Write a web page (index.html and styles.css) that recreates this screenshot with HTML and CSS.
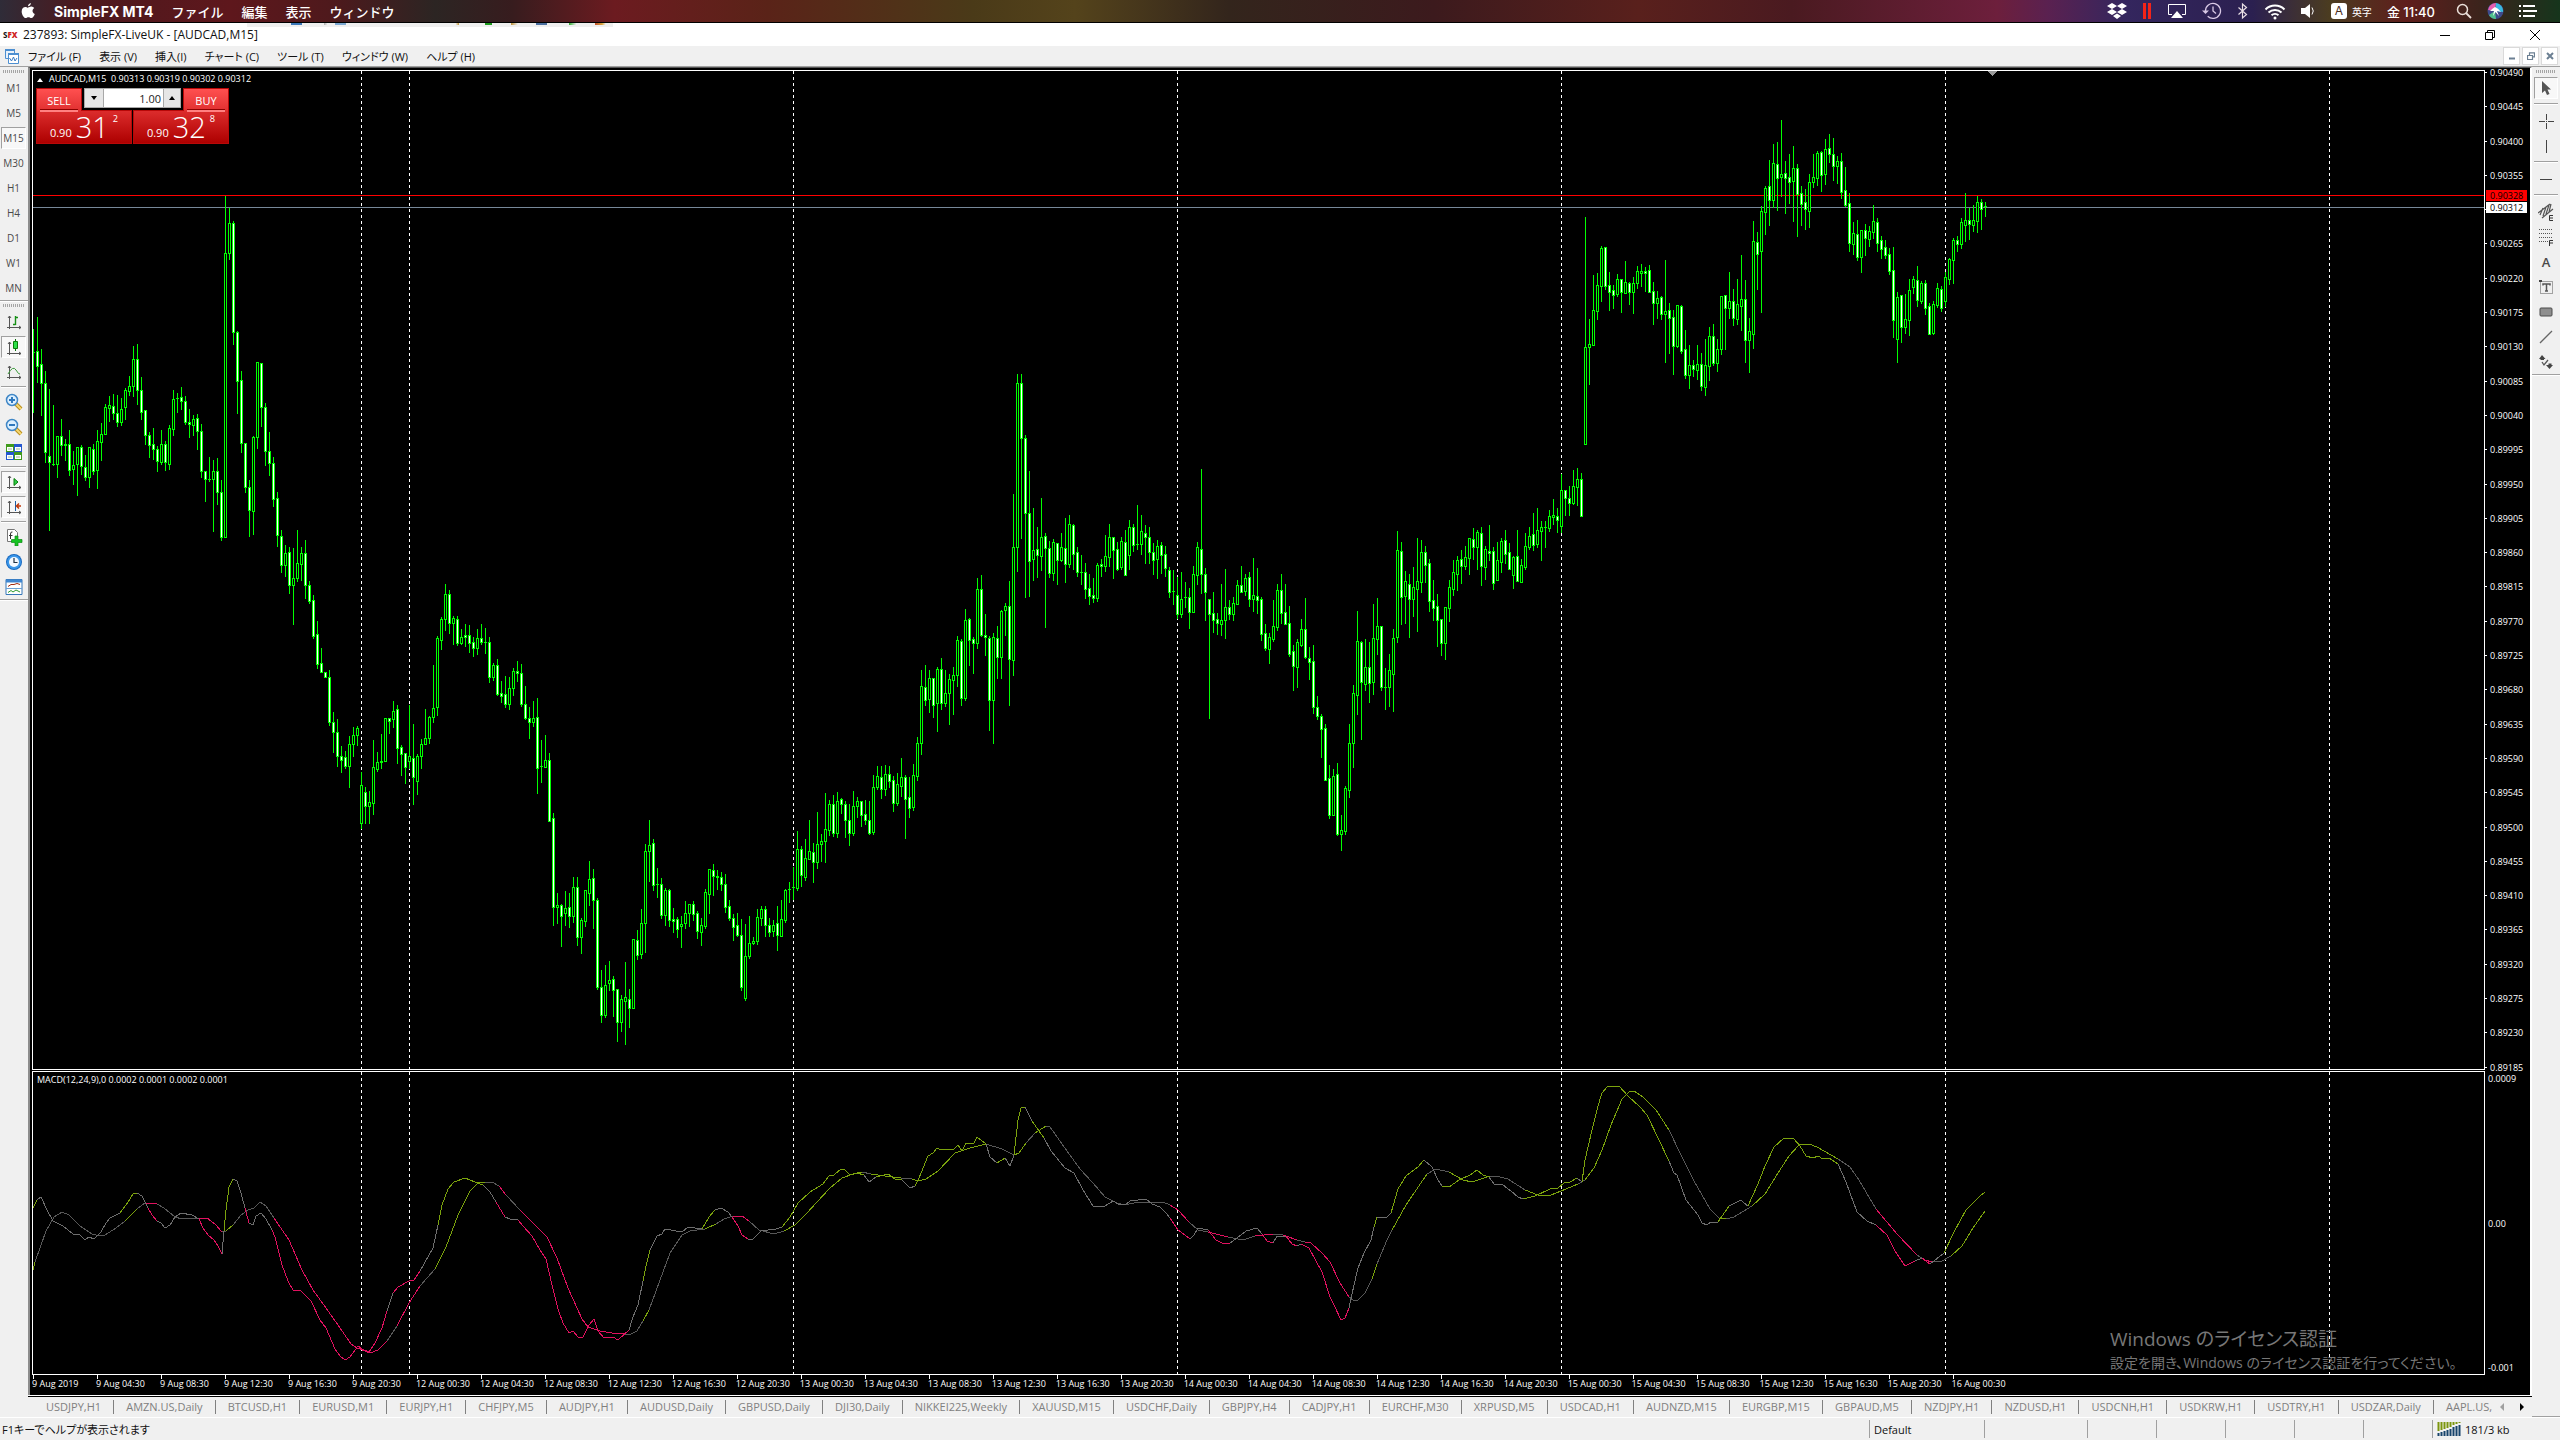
FILE: index.html
```html
<!DOCTYPE html>
<html lang="ja">
<head>
    <meta charset="UTF-8">
    <meta name="viewport" content="width=device-width, initial-scale=1.0">
    <title>237893: SimpleFX-LiveUK - [AUDCAD,M15]</title>
    <link rel="stylesheet" href="styles.css">
</head>
<body>
<header class="mac-bar">
    <svg class="apple" viewBox="0 0 16 18" aria-hidden="true"><path d="M11 0c.2 1.700-1.400 3.500-3 3.500C7.800 1.900 9.500.200 11 0zM8.200 4.600c.8 0 1.800-1 3.400-.9 1.200.1 2.300.6 3 1.600-2.700 1.700-2.200 5.200.6 6.300-.7 1.900-2.100 4.400-3.600 4.400-1.200 0-1.600-.8-3.100-.8-1.500 0-2 .8-3.100.8C3.800 16 1.300 12.300 1.300 9c0-3.100 2-4.700 3.900-4.700 1.300 0 2.200.8 3 .8z" fill="#fff"/></svg>
    <nav class="mac-menu">
        <a href="#" class="app-name">SimpleFX MT4</a>
        <a href="#">ファイル</a>
        <a href="#">編集</a>
        <a href="#">表示</a>
        <a href="#">ウィンドウ</a>
    </nav>
    <div class="mac-status">
        <svg width="20" height="18" viewBox="0 0 20 18"><path fill="#fff" d="M5 1l5 3-5 3-5-3zM15 1l5 3-5 3-5-3zM5 7l5 3-5 3-5-3zM15 7l5 3-5 3-5-3zM10 11.500l4 2.500-4 3-4-3z"/></svg>
        <svg width="10" height="18" viewBox="0 0 10 18"><path fill="#f42318" d="M1 1h3v16H1zM6 1h3v16H6z"/></svg>
        <svg width="20" height="18" viewBox="0 0 20 18"><path fill="none" stroke="#fff" d="M5 12.500H1.500v-10h17v10H15"/><path fill="#fff" d="M10 9l6 7H4z"/></svg>
        <svg width="20" height="18" viewBox="0 0 20 18"><g fill="none" stroke="#d9c9e6" stroke-width="1.300"><path d="M3.500 9a7.500 7.500 0 1 1 2.200 5.200M11 4.500V9l3 2.500"/></g><path fill="#d9c9e6" d="M0 8.500h7L3.500 12z"/></svg>
        <svg width="12" height="18" viewBox="0 0 12 18"><path fill="none" stroke="#e9dfe6" stroke-width="1.200" d="M1.500 5.500l8 7-4 3.500V2l4 3.500-8 7"/></svg>
        <svg width="22" height="18" viewBox="0 0 22 18"><g fill="none" stroke="#fff" stroke-width="2"><path d="M1.500 7.500a13.500 13.500 0 0 1 19 0M4.500 10.500a9.500 9.500 0 0 1 13 0M7.500 13.300a5.200 5.200 0 0 1 7 0"/></g><circle cx="11" cy="16" r="1.500" fill="#fff"/></svg>
        <svg width="14" height="18" viewBox="0 0 14 18"><path fill="#fff" d="M0 6h4l5-4v14l-5-4H0z"/><path fill="none" stroke="#fff" d="M11 5.500q2.500 3.500 0 7"/></svg>
        <span class="ime-badge">A</span>
        <span class="ime">英字</span>
        <span class="clock">金 11:40</span>
        <svg width="16" height="18" viewBox="0 0 16 18"><circle cx="6.500" cy="7.500" r="5" fill="none" stroke="#eadfd9" stroke-width="1.500"/><path stroke="#eadfd9" stroke-width="1.800" d="M10 11l5 5"/></svg>
        <svg width="17" height="18" viewBox="0 0 17 18"><circle cx="8.500" cy="9" r="8" fill="#3d4a8c"/><path fill="#e55fae" d="M1 8a8 8 0 0 1 8-7l-1 8z"/><path fill="#39b9e0" d="M9 1a8 8 0 0 1 7 9L8.500 9z"/><path fill="#4fc28e" d="M2 13l6-4 1 8a8 8 0 0 1-7-4z"/><path fill="#fff" d="M3 9q3-3 5-4 3 1 6 5-3-1-4-1l2 5-3.500-4-2.500 4 1-5z"/></svg>
        <svg width="18" height="18" viewBox="0 0 18 18"><path fill="#fff" d="M0 3h2v2H0zM0 8h2v2H0zM0 13h2v2H0zM4 3h12v2H4zM4 8h14v2H4zM4 13h12v2H4z"/></svg>
    </div>
</header>

<div class="title-bar">
    <span class="behind" aria-hidden="true"></span>
    <span class="logo">S<b>FX</b></span>
    <h1>237893: SimpleFX-LiveUK - [AUDCAD,M15]</h1>
    <div class="window-buttons">
        <button type="button" aria-label="最小化"><svg width="10" height="10" viewBox="0 0 10 10"><path d="M0 5.500h10" stroke="#000"/></svg></button>
        <button type="button" aria-label="元に戻す"><svg width="10" height="10" viewBox="0 0 10 10"><path d="M.5 2.500h7v7h-7zM2.500 2V.5h7v7H8" fill="none" stroke="#000"/></svg></button>
        <button type="button" aria-label="閉じる"><svg width="10" height="10" viewBox="0 0 10 10"><path d="M0 0l10 10M10 0L0 10" stroke="#000"/></svg></button>
    </div>
</div>

<div class="menu-bar">
    <svg class="menu-icon" width="14" height="15" viewBox="0 0 14 15"><path d="M.5.500h9v9h-9z" fill="#e9f2fb" stroke="#4d8fd1"/><path d="M3.500 4.500h10v10h-10z" fill="#fff" stroke="#4d8fd1"/><path d="M0 1h10M3 5h11" stroke="#4d8fd1" stroke-width="2"/><path d="M4.500 9l2 3 2-4 1.500 4 2-3" fill="none" stroke="#3a7cc4"/></svg>
    <nav class="menu">
        <a href="#">ファイル (F)</a>
        <a href="#">表示 (V)</a>
        <a href="#">挿入(I)</a>
        <a href="#">チャート (C)</a>
        <a href="#">ツール (T)</a>
        <a href="#">ウィンドウ (W)</a>
        <a href="#">ヘルプ (H)</a>
    </nav>
    <div class="mdi-buttons">
        <button type="button" aria-label="チャートを最小化"><svg width="8" height="8" viewBox="0 0 8 8"><path d="M1 6.500h6" stroke="#6b7f92" stroke-width="2"/></svg></button>
        <button type="button" aria-label="チャートを元に戻す"><svg width="8" height="8" viewBox="0 0 8 8"><path d="M.5 3.500h5v4h-5zM2.500 3V.800h5v4H6" fill="none" stroke="#6b7f92" stroke-width="1.200"/></svg></button>
        <button type="button" aria-label="チャートを閉じる"><svg width="8" height="8" viewBox="0 0 8 8"><path d="M1 1l6 6M7 1L1 7" stroke="#6b7f92" stroke-width="2"/></svg></button>
    </div>
</div>

<main class="workspace">
    <aside class="toolbar left">
        <div class="tool-group">
            <i class="grip"></i>
            <button type="button">M1</button>
            <button type="button">M5</button>
            <button type="button" class="pressed">M15</button>
            <button type="button">M30</button>
            <button type="button">H1</button>
            <button type="button">H4</button>
            <button type="button">D1</button>
            <button type="button">W1</button>
            <button type="button">MN</button>
        </div>
        <div class="tool-group">
            <i class="grip"></i>
            <button type="button" aria-label="バーチャート"><svg width="16" height="16" viewBox="0 0 16 16"><path d="M3.500 2v13M1 13.500h14M2 4l1.500-2L5 4M13 12l2 1.500-2 1.500" fill="none" stroke="#555"/><path d="M9.500 2v9M9.500 3.500H12M7 10.500h2.500" stroke="#169016" fill="none" stroke-width="1.400"/></svg></button>
            <button type="button" class="pressed" aria-label="ローソク足"><svg width="16" height="16" viewBox="0 0 16 16"><path d="M3.500 3v13M1 14.500h14M2 5l1.500-2L5 5M13 13l2 1.500-2 1.500" fill="none" stroke="#555"/><path d="M9.500 0v12" stroke="#0b6f0b"/><path d="M7.500 2.500h4v7h-4z" fill="#2ee04a" stroke="#0b7f0b"/></svg></button>
            <button type="button" aria-label="ラインチャート"><svg width="16" height="16" viewBox="0 0 16 16"><path d="M3.500 2v13M1 13.500h14M2 4l1.500-2L5 4M13 12l2 1.500-2 1.500" fill="none" stroke="#555"/><path d="M2 10q5-9 8-4t4 4" fill="none" stroke="#3a9a3a"/></svg></button>
            <hr>
            <button type="button" aria-label="ズームイン"><svg width="18" height="18" viewBox="0 0 18 18"><path d="M10 10l6 6" stroke="#b98e1e" stroke-width="4"/><path d="M10 10l6 6" stroke="#f7d972" stroke-width="2"/><circle cx="7" cy="7" r="5.500" fill="#dcf0ff" stroke="#3f86c6" stroke-width="1.500"/><path d="M7 4v6M4 7h6" stroke="#2f78bd" stroke-width="2"/></svg></button>
            <button type="button" aria-label="ズームアウト"><svg width="18" height="18" viewBox="0 0 18 18"><path d="M10 10l6 6" stroke="#b98e1e" stroke-width="4"/><path d="M10 10l6 6" stroke="#f7d972" stroke-width="2"/><circle cx="7" cy="7" r="5.500" fill="#dcf0ff" stroke="#3f86c6" stroke-width="1.500"/><path d="M4 7h6" stroke="#2f78bd" stroke-width="2"/></svg></button>
            <button type="button" aria-label="ウィンドウの整列"><svg width="16" height="16" viewBox="0 0 16 16"><path d="M0 0h8v8H0zM8 8h8v8H8z" fill="#3f9a1c"/><path d="M8 0h8v8H8zM0 8h8v8H0z" fill="#2457cf"/><path d="M1 3h6v4H1zM9 3h6v4H9zM1 11h6v4H1zM9 11h6v4H9z" fill="#fff"/><path d="M2 5h4M10 5h4M2 13h4M10 13h4" stroke="#9dbb9d"/></svg></button>
            <hr>
            <button type="button" class="pressed" aria-label="自動スクロール"><svg width="16" height="16" viewBox="0 0 16 16"><path d="M3.500 2v13M1 13.500h14M2 4l1.500-2L5 4M13 12l2 1.500-2 1.500" fill="none" stroke="#555"/><path d="M8 4.500l4 3.500-4 3.500z" fill="#2fd04a" stroke="#0b7f0b"/></svg></button>
            <button type="button" class="pressed" aria-label="チャートシフト"><svg width="16" height="16" viewBox="0 0 16 16"><path d="M3.500 2v13M1 13.500h14M2 4l1.500-2L5 4M13 12l2 1.500-2 1.500" fill="none" stroke="#555"/><path d="M9.500 2v10" stroke="#1c5fa8"/><path d="M15 7h-4M13 4.500L10.500 7 13 9.500" stroke="#c0390b" stroke-width="1.500" fill="none"/></svg></button>
            <hr>
            <button type="button" aria-label="インディケーター"><svg width="18" height="18" viewBox="0 0 18 18"><path d="M2.500 1.500h7l3 3v9h-10z" fill="#fff" stroke="#777"/><path d="M7.500 4q-2-.5-2 2v5M4 7.500h3.500" fill="none" stroke="#333"/><path d="M10 8h3v3.500h4v3h-4V18h-3v-3.500H6.500v-3H10z" fill="#16c322" stroke="#0c8a14" stroke-width=".7"/></svg></button>
            <button type="button" aria-label="時間足設定"><svg width="18" height="18" viewBox="0 0 18 18"><circle cx="9" cy="9" r="8" fill="#1668c0"/><circle cx="9" cy="9" r="7" fill="#3c98ea"/><circle cx="9" cy="9" r="5" fill="#f4f9ff"/><path d="M9 5v4.500h3.500" fill="none" stroke="#234" stroke-width="1.200"/></svg></button>
            <button type="button" aria-label="定型チャート"><svg width="18" height="16" viewBox="0 0 18 16"><path d="M1 .5h16v15H1z" fill="#fff" stroke="#3576b8"/><path d="M1 2h16" stroke="#3f86d0" stroke-width="3"/><path d="M1 9.500h16" stroke="#6aa0d4"/><path d="M3 7.500l3-2h3l3-1 3 1" fill="none" stroke="#a02a10"/><path d="M3 13.500l3-2 2 1.500 3-2 4 2" fill="none" stroke="#2c9a2c"/></svg></button>
        </div>
    </aside>

    <section class="chart-column">
        <div class="chart">
            <div class="panel price-panel">
                <svg id="price-chart" viewBox="33 71 2451 998" preserveAspectRatio="none" aria-label="AUDCAD M15"></svg>
                <p class="quote"><i class="collapse"></i>AUDCAD,M15&nbsp; 0.90313 0.90319 0.90302 0.90312</p>
                <div class="trade">
                    <button type="button" class="side sell">SELL</button>
                    <div class="lots">
                        <button type="button" aria-label="ロットを減らす"><i class="down"></i></button>
                        <input type="text" value="1.00" aria-label="ロット数">
                        <button type="button" aria-label="ロットを増やす"><i class="up"></i></button>
                    </div>
                    <button type="button" class="side buy">BUY</button>
                    <button type="button" class="price bid"><span>0.90</span><strong>31</strong><sup>2</sup></button>
                    <button type="button" class="price ask"><span>0.90</span><strong>32</strong><sup>8</sup></button>
                </div>
            </div>
            <div class="axis price-axis">
                <div class="ticks" id="price-ticks"></div>
                <span class="tag ask-tag">0.90328</span>
                <span class="tag bid-tag">0.90312</span>
            </div>
            <div class="panel macd-panel">
                <svg id="macd-chart" viewBox="33 1072 2451 302" preserveAspectRatio="none" aria-label="MACD"></svg>
                <p class="quote">MACD(12,24,9),0 0.0002 0.0001 0.0002 0.0001</p>
            </div>
            <div class="axis macd-axis">
                <span>0.0009</span>
                <span>0.00</span>
                <span>-0.001</span>
            </div>
            <div class="time-axis" id="time-axis"></div>
            <div class="watermark">
                <p class="watermark-title">Windows のライセンス認証</p>
                <p>設定を開き、Windows のライセンス認証を行ってください。</p>
            </div>
        </div>
        <div class="tab-bar">
            <nav class="tabs">
                <a href="#">USDJPY,H1</a>
                <a href="#">AMZN.US,Daily</a>
                <a href="#">BTCUSD,H1</a>
                <a href="#">EURUSD,M1</a>
                <a href="#">EURJPY,H1</a>
                <a href="#">CHFJPY,M5</a>
                <a href="#">AUDJPY,H1</a>
                <a href="#">AUDUSD,Daily</a>
                <a href="#">GBPUSD,Daily</a>
                <a href="#">DJI30,Daily</a>
                <a href="#">NIKKEI225,Weekly</a>
                <a href="#">XAUUSD,M15</a>
                <a href="#">USDCHF,Daily</a>
                <a href="#">GBPJPY,H4</a>
                <a href="#">CADJPY,H1</a>
                <a href="#">EURCHF,M30</a>
                <a href="#">XRPUSD,M5</a>
                <a href="#">USDCAD,H1</a>
                <a href="#">AUDNZD,M15</a>
                <a href="#">EURGBP,M15</a>
                <a href="#">GBPAUD,M5</a>
                <a href="#">NZDJPY,H1</a>
                <a href="#">NZDUSD,H1</a>
                <a href="#">USDCNH,H1</a>
                <a href="#">USDKRW,H1</a>
                <a href="#">USDTRY,H1</a>
                <a href="#">USDZAR,Daily</a>
            </nav>
            <a href="#" class="last-tab">AAPL.US,</a>
            <button type="button" class="tab-prev" aria-label="前のタブ"></button>
            <button type="button" class="tab-next" aria-label="次のタブ"></button>
        </div>
    </section>

    <aside class="toolbar right">
        <div class="tool-group">
            <i class="grip"></i>
            <button type="button" class="pressed" aria-label="カーソル"><svg width="16" height="16" viewBox="0 0 16 16"><path d="M4 1v12l3-2.500 2 4.500 2.500-1-2-4.500H13z" fill="#555"/></svg></button>
            <hr>
            <button type="button" aria-label="クロスヘア"><svg width="16" height="16" viewBox="0 0 16 16"><path d="M8.500 1v6M8.500 10v6M1 8.500h6M10 8.500h6M8 8.500h1" stroke="#444"/></svg></button>
            <button type="button" aria-label="垂直線"><svg width="16" height="16" viewBox="0 0 16 16"><path d="M8.500 2v13" stroke="#444"/></svg></button>
            <hr>
            <button type="button" aria-label="水平線"><svg width="16" height="16" viewBox="0 0 16 16"><path d="M2 8.500h12" stroke="#444"/></svg></button>
            <hr>
            <button type="button" aria-label="等距離チャネル"><svg width="16" height="18" viewBox="0 0 16 18"><path d="M0 10L12 1M4 15L15 6M2 12l3-7M5 13l3-9M8 11l3-9M11 9l2-8" stroke="#555" stroke-width="1.200"/><path d="M15 12.500h-3.500v5H15M11.500 15H15" stroke="#333" fill="none"/></svg></button>
            <button type="button" aria-label="フィボナッチ"><svg width="16" height="18" viewBox="0 0 16 18"><path d="M1 1.500h14M1 5.500h14M1 9.500h14M1 13.500h9" stroke="#555" stroke-dasharray="1 1"/><path d="M15 12.500h-3.500V18M11.500 15H15" stroke="#333" fill="none"/></svg></button>
            <button type="button" class="letter" aria-label="テキスト">A</button>
            <button type="button" aria-label="テキストラベル"><svg width="16" height="16" viewBox="0 0 16 16"><path d="M2.500 2.500h12v12h-12z" stroke="#555" fill="none" stroke-dasharray="1 1"/><path d="M5 6.500V5h7v1.500M8.500 5v7M7 12h3" stroke="#555" stroke-width="1.500" fill="none"/><path d="M1 1h3v2H1z" fill="#444"/></svg></button>
            <button type="button" aria-label="長方形"><svg width="16" height="16" viewBox="0 0 16 16"><rect x="2" y="4" width="12" height="8" rx="1" fill="#8e8e8e" stroke="#4c4c4c"/></svg></button>
            <button type="button" aria-label="トレンドライン"><svg width="16" height="16" viewBox="0 0 16 16"><path d="M2 14L14 2" stroke="#666" stroke-width="1.300"/></svg></button>
            <button type="button" aria-label="矢印"><svg width="16" height="16" viewBox="0 0 16 16"><path d="M4 1l3.500 4H6v1H2.500V5H1zM11.500 15l3.500-4h-1.500V9.500h-3V11H8z" fill="#444"/><path d="M4 8l2 3 4-5" stroke="#555" fill="none" stroke-width="1.300"/></svg></button>
        </div>
    </aside>
</main>

<footer class="status-bar">
    <span class="help">F1キーでヘルプが表示されます</span>
    <span class="cell wide">Default</span>
    <span class="cell mid"></span>
    <span class="cell"></span>
    <span class="cell"></span>
    <span class="cell"></span>
    <span class="cell"></span>
    <span class="cell"></span>
    <span class="cell traffic">
        <svg width="24" height="14" viewBox="0 0 24 14"><path d="M1.500 0v9M4.500 0v8M7.500 0v7M10.500 0v6M13.500 0v5M16.500 0v3M19.500 0v2M22.500 0v1" stroke="#7c960f" stroke-width="2"/><path d="M1.500 14v-3M4.500 14v-4M7.500 14V9M10.500 14V8M13.500 14V7M16.500 14V5M19.500 14V4M22.500 14V3" stroke="#17436b" stroke-width="2"/></svg>
        181/3 kb
    </span>
</footer>
<script src="chart.js"></script>
</body>
</html>
```
FILE: styles.css
```css
* {
    box-sizing: border-box;
}

body {
    display: flex;
    flex-direction: column;
    min-height: 100vh;
    margin: 0;
    background: #f0f0f0;
    color: #111;
    font-family: "Open Sans", "Noto Sans CJK JP", sans-serif;
    font-size: 12px;
}

a {
    color: inherit;
    text-decoration: none;
}

h1, p {
    margin: 0;
    font-weight: normal;
}

button {
    display: flex;
    align-items: center;
    justify-content: center;
    margin: 0;
    padding: 0;
    border: 0;
    background: none;
    color: inherit;
    font-family: inherit;
    font-size: inherit;
}

/* Mac menu bar */
.mac-bar {
    display: flex;
    align-items: center;
    height: 23px;
    padding: 0 23px 0 20px;
    border-bottom: 1px solid #000;
    background: linear-gradient(90deg, #2f2c38 0%, #4c191e 3%, #5e171c 9%, #4e191c 13%, #2c2523 17%, #371c1e 20%, #6c1b20 24%, #5a2318 30%, #4a3a18 38%, #54431b 42%, #33251c 48%, #3c1a1d 56%, #59201c 64%, #4a1a20 70%, #6d1f3c 78%, #5a2150 80%, #34265e 83%, #2b2050 88%, #4b3c20 91%, #5f1e1c 94%, #3a241c 97%, #16351c 100%);
    color: #fff;
    font-family: Inter, "Noto Sans CJK JP", sans-serif;
    font-size: 13px;
}

.apple {
    width: 16px;
    height: 17px;
}

.mac-menu {
    display: flex;
    flex: 1;
    align-items: center;
    gap: 18px;
    padding-left: 18px;
    font-weight: 500;
}

.mac-menu .app-name {
    font-size: 14px;
    font-weight: bold;
}

.mac-status {
    display: flex;
    align-items: center;
    gap: 15px;
}

.ime-badge {
    width: 16px;
    margin-left: 1px;
    border-radius: 3px;
    background: #fff;
    color: #4a2b1c;
    font-size: 12px;
    line-height: 16px;
    text-align: center;
}

.ime {
    margin-left: -10px;
    font-size: 10px;
}

.clock {
    margin-right: 6px;
    font-weight: 500;
}

/* Application title */
.title-bar {
    position: relative;
    display: flex;
    align-items: center;
    height: 23px;
    padding: 0 20px 0 3px;
    background: #fff;
}

.behind {
    position: absolute;
    top: 0;
    left: 247px;
    width: 366px;
    height: 4px;
    background: linear-gradient(90deg, transparent 12%, #3b77b8 12%, #3b77b8 15%, transparent 15%, transparent 21%, #aaa 21%, transparent 22%, transparent 24%, #7ba7d1 24%, #7ba7d1 27%, transparent 27%, transparent 57%, #bb8b24 58%, transparent 58%, transparent 65%, #1c9a1c 65%, #1c9a1c 67%, transparent 67%, transparent 72%, #b98a2a 72%, transparent 74%, transparent 79%, #4b6fa0 79%, #4b6fa0 82%, transparent 82%, transparent 88%, #2fae2f 88%, transparent 90%, transparent 95%, #c04a2c 95%, #d9a63a 97%, transparent 98%) 0 0 / 100% 2px no-repeat, #efefef;
}

.logo {
    width: 20px;
    font-size: 8px;
    font-weight: bold;
}

.logo b {
    color: #cf1f1f;
}

.title-bar h1 {
    flex: 1;
    font-size: 12px;
}

.window-buttons {
    display: flex;
    gap: 35px;
}

.menu-bar {
    display: flex;
    align-items: center;
    height: 20px;
    padding: 0 2px 0 5px;
}

.menu {
    display: flex;
    flex: 1;
    gap: 18px;
    padding-left: 9px;
    font-size: 11px;
    font-feature-settings: "palt";
}

.mdi-buttons {
    display: flex;
    gap: 2px;
}

.mdi-buttons button {
    width: 17px;
    height: 18px;
    border: 1px solid #dadada;
    background: #fff;
}

/* Toolbars */
.workspace {
    display: flex;
    flex: 1;
    border-top: 1px solid #a0a0a0;
    border-bottom: 1px solid #fff;
}

.toolbar {
    width: 28px;
    padding-top: 1px;
    color: #4a4a4a;
    font-size: 10px;
}

.toolbar.right {
    border-bottom: 1px solid #a0a0a0;
}

.tool-group {
    display: flex;
    flex-direction: column;
    gap: 3px;
    padding: 2px 2px 1px 1px;
    border-bottom: 1px solid #a0a0a0;
    box-shadow: 0 1px #fff;
}

.tool-group + .tool-group {
    margin-top: 1px;
}

.grip {
    height: 3px;
    margin: 0 2px 1px;
    background: repeating-linear-gradient(90deg, #a5a5a5 0 1px, transparent 1px 2px);
}

.tool-group button {
    height: 22px;
    border: 1px solid transparent;
}

.tool-group .pressed {
    border-color: #a0a0a0 #fff #fff #a0a0a0;
    background: #f8f8f8;
}

.tool-group hr {
    width: 100%;
    height: 2px;
    margin: 0;
    border: 0;
    border-top: 1px solid #a0a0a0;
    background: #fff;
}

.right .tool-group {
    padding-left: 2px;
}

.right hr {
    margin: 1px 0 2px;
}

.letter {
    font-size: 13px;
    font-weight: 600;
}

/* Chart */
.chart-column {
    display: flex;
    flex: 1;
    flex-direction: column;
    min-width: 0;
}

.chart {
    position: relative;
    display: grid;
    flex: 1;
    grid-template-columns: 1fr 45px;
    grid-template-rows: 1000fr 305fr 20px;
    padding: 2px 0 0 2px;
    border-left: 2px solid #8c8c8c;
    border-right: 2px solid #fff;
    border-top: 1px solid #555;
    background: #000;
    color: #fff;
    font-size: 9px;
    line-height: 12px;
}

.panel {
    position: relative;
    min-height: 0;
    border: 1px solid #fff;
}

.macd-panel {
    margin-top: 1px;
}

.panel svg {
    position: absolute;
    width: 100%;
    height: 100%;
    shape-rendering: crispEdges;
}

.quote {
    position: relative;
    padding: 2px 4px;
}

.collapse, .up, .down {
    display: inline-block;
    border: 3px solid transparent;
    border-top: 0;
    border-bottom: 4px solid currentColor;
}

.collapse {
    margin-right: 6px;
}

.down {
    border-top: 4px solid currentColor;
    border-bottom: 0;
}

.axis {
    position: relative;
}

.ticks {
    display: flex;
    flex-direction: column;
    justify-content: space-between;
    height: 100%;
}

.ticks span, .macd-axis span {
    display: block;
    height: 5px;
    padding-left: 5px;
    line-height: 5px;
}

.ticks span {
    background: linear-gradient(#fff, #fff) 0 2px / 2px 1px no-repeat;
}

.tag {
    position: absolute;
    left: 1px;
    width: 41px;
    height: 11px;
    padding-left: 4px;
    line-height: 11px;
    color: #000;
}

.ask-tag {
    top: 12%;
    background: #f00;
}

.bid-tag {
    top: 13.2%;
    background: #fff;
}

.macd-axis {
    display: flex;
    flex-direction: column;
    justify-content: space-between;
    padding: 6px 0 5px;
}

.macd-axis span {
    padding-left: 3px;
}

.time-axis {
    display: flex;
    grid-column: 1 / 3;
    padding-right: 45px;
    white-space: nowrap;
}

.time-axis span {
    flex: none;
    width: calc(100% * 64 / 2453);
    padding-top: 3px;
    background: linear-gradient(#fff, #fff) 1px 0 / 1px 4px no-repeat;
}

.watermark {
    position: absolute;
    right: 86px;
    bottom: 22px;
    width: 334px;
    color: #777;
    font-size: 14px;
    line-height: 20px;
    white-space: nowrap;
    font-feature-settings: "palt";
}

.watermark-title {
    font-size: 19px;
    line-height: 28px;
}

/* One click trading */
.trade {
    position: relative;
    display: grid;
    grid-template-columns: 46px 101px 46px;
    grid-template-rows: 22px 34px;
    width: 193px;
    margin: 1px 3px;
}

.side {
    position: relative;
    z-index: 1;
    margin-bottom: -1px;
    border: 1px solid #b80808;
    border-bottom: 0;
    background: linear-gradient(#ff5050, #e03030);
    color: #fff;
    font-size: 11px;
}

.side::after {
    position: absolute;
    top: 20px;
    left: 3px;
    right: 3px;
    height: 2px;
    border-top: 1px solid #8e0000;
    background: #ff8080;
    content: "";
}

.price {
    position: relative;
    grid-row: 2;
    gap: 4px;
    width: 96px;
    border: 1px solid #b80808;
    background: linear-gradient(#dc2c2c, #ad0000);
    color: #fff;
    font-size: 11px;
}

.bid {
    grid-column: 1 / 3;
}

.ask {
    grid-column: 2 / 4;
    justify-self: end;
}

.price span {
    align-self: flex-end;
    padding-bottom: 4px;
    line-height: 12px;
}

.price strong {
    font-size: 29px;
    font-weight: 300;
    line-height: 32px;
}

.price sup {
    align-self: flex-start;
    line-height: 16px;
}

.lots {
    display: flex;
    height: 20px;
    margin: 0 2px;
    border: 1px solid #a8a8a8;
    background: #e6e6e6;
    color: #000;
}

.lots button {
    flex: none;
    width: 18px;
}

.lots button:last-child {
    width: 16px;
}

.lots input {
    flex: 1;
    width: 100%;
    min-width: 0;
    padding: 0 2px;
    border: 1px solid #a8a8a8;
    border-width: 0 1px;
    background: #fff;
    color: #222;
    font-family: inherit;
    font-size: 11px;
    text-align: right;
}

/* Chart tabs */
.tab-bar {
    display: flex;
    align-items: center;
    height: 22px;
    padding-left: 6px;
    border-top: 1px solid #fff;
    box-shadow: inset 0 1px #000;
    color: #808080;
    font-size: 11px;
    white-space: nowrap;
}

.tabs {
    display: flex;
    flex: 1;
    min-width: 0;
}

.tabs a {
    flex: 1 0 auto;
    padding: 0 6px;
    border-right: 1px solid #808080;
    line-height: 14px;
    text-align: center;
}

.last-tab {
    width: 58px;
    padding-left: 12px;
    overflow: hidden;
}

.tab-prev, .tab-next {
    width: 20px;
}

.tab-prev::before, .tab-next::before {
    border: 4px solid transparent;
    border-left: 0;
    border-right: 4px solid #a0a0a0;
    content: "";
}

.tab-next::before {
    border-right: 0;
    border-left: 4px solid #000;
}

/* Status bar */
.status-bar {
    display: flex;
    align-items: center;
    height: 22px;
    font-size: 11px;
    font-feature-settings: "palt";
}

.help {
    flex: 1;
    padding-left: 2px;
}

.cell {
    display: flex;
    align-items: center;
    gap: 4px;
    width: 69px;
    height: 18px;
    padding-left: 4px;
    border-left: 1px solid #a0a0a0;
}

.cell.wide {
    width: 115px;
}

.cell.mid {
    width: 103px;
}

.cell.traffic {
    width: 128px;
}
```
FILE: chart.js
```js
// Candles, one per 4px column: high, body top, body bottom, low, u(p) or d(own)
const candles = `
329 352 352 412 u,317 351 366 382 d,349 364 383 415 d,371 383 452 462 d,389 456 462 530 d,405 464 464 465 u,436 436 464 477 u,419 436 445 455 d,
439 444 445 460 d,430 444 470 475 d,451 465 469 484 u,447 447 464 495 u,445 447 466 474 d,455 467 477 480 d,447 447 477 487 u,444 449 471 474 d,
430 441 470 488 u,423 434 442 460 u,404 407 434 434 u,396 405 408 421 u,394 406 413 419 d,395 413 422 426 d,398 409 422 425 u,388 390 407 419 u,
376 386 391 395 u,346 359 386 396 u,344 359 390 404 d,377 390 412 419 d,410 410 435 444 d,432 435 445 457 d,428 444 449 459 d,446 449 461 471 d,
430 444 462 464 u,441 444 462 470 d,425 428 464 469 u,390 399 429 435 u,393 398 398 412 d,387 397 401 409 d,396 401 422 424 d,409 422 424 437 d,
415 419 425 435 u,414 418 431 449 d,424 431 471 477 d,471 471 479 501 d,457 479 479 481 u,460 471 479 531 u,458 471 492 504 d,480 492 537 540 d,
196 253 537 537 u,208 223 253 259 u,221 223 332 344 d,331 332 381 413 d,371 380 443 452 d,443 443 487 492 d,480 487 510 536 d,436 437 511 534 u,
362 362 437 448 u,363 363 407 426 d,403 407 451 465 d,432 451 463 475 d,457 463 499 506 d,492 498 535 546 d,530 536 565 572 d,545 553 565 576 u,
547 552 585 593 d,548 578 585 624 u,530 563 578 581 u,547 553 564 580 u,540 553 585 598 d,581 585 601 603 d,595 600 636 638 d,621 634 664 668 d,
648 663 672 672 d,672 672 677 677 d,670 677 722 725 d,712 722 732 752 d,719 732 756 766 d,746 756 760 772 d,751 757 766 768 d,736 744 766 787 u,
727 735 744 756 u,726 728 735 745 u,772 785 823 828 u,787 792 806 823 d,791 802 806 823 u,740 767 803 814 u,752 762 769 771 u,734 761 762 768 u,
718 718 761 761 u,718 718 721 733 d,701 711 719 727 u,705 709 748 763 d,745 747 754 775 d,753 753 767 783 d,705 756 761 768 u,724 758 777 804 d,
754 756 781 794 u,739 744 756 768 u,709 738 744 744 u,716 717 738 743 u,665 708 717 722 u,636 638 707 715 u,617 619 640 649 u,584 594 619 630 u,
590 594 623 633 d,616 618 623 644 u,616 619 643 645 d,629 637 643 644 u,624 635 637 646 d,625 635 643 652 d,637 642 648 656 d,629 638 648 654 u,
624 638 642 644 d,628 642 642 653 d,637 642 677 682 d,663 665 677 680 u,659 665 694 695 d,681 693 696 702 d,676 694 704 707 d,677 688 704 709 u,
668 671 688 695 u,661 671 673 681 d,664 673 704 706 d,686 704 718 719 d,707 718 722 738 d,701 718 722 726 u,698 717 768 793 d,740 766 766 782 u,
735 760 767 767 u,753 760 821 821 d,813 818 907 925 d,893 905 907 923 u,904 905 916 946 d,891 908 913 925 u,893 907 916 927 d,877 887 916 922 u,
877 887 937 945 d,918 920 937 953 u,890 890 921 926 u,861 879 893 905 u,869 878 900 928 d,898 900 987 989 d,970 987 1015 1022 d,965 985 1015 1017 u,
961 980 983 990 u,976 979 990 1016 d,989 989 1022 1041 d,995 999 1022 1031 u,962 997 1001 1044 u,989 999 1008 1027 d,939 939 1008 1008 u,930 940 955 959 d,
909 923 954 958 u,844 851 923 952 u,820 845 851 881 u,839 843 885 890 d,868 884 884 897 u,878 884 915 918 d,888 890 915 925 u,889 890 920 926 d,
908 919 921 932 d,917 919 929 937 d,916 924 926 947 u,901 913 923 928 u,904 904 913 926 u,901 904 914 920 d,911 913 931 938 d,918 925 932 945 u,
889 892 926 928 u,869 869 894 913 u,864 870 876 895 d,870 876 877 889 d,872 877 884 890 d,874 884 907 912 d,900 906 918 920 d,914 918 927 940 d,
913 925 935 936 d,919 935 987 990 d,924 956 998 1000 u,916 943 956 958 u,937 941 943 944 u,909 917 941 944 u,906 909 918 925 u,906 909 925 936 d,
918 925 932 936 d,920 925 931 936 u,906 923 935 950 d,900 919 936 936 u,889 890 920 922 u,882 889 889 902 u,867 887 887 899 u,831 849 888 890 u,
846 849 875 886 d,839 858 877 880 u,820 851 859 859 u,843 852 862 882 d,812 844 862 868 u,834 841 844 861 u,793 829 841 862 u,800 804 830 835 u,
795 804 833 836 d,792 801 833 837 u,798 799 804 813 d,801 804 820 837 d,804 820 833 845 d,791 806 833 835 u,797 801 806 817 u,801 801 815 826 d,
800 814 820 824 d,801 820 833 834 d,775 787 832 834 u,766 776 787 789 u,766 777 789 798 d,765 774 789 795 u,766 774 781 787 d,776 780 803 811 d,
773 784 803 805 u,758 777 786 796 u,775 777 799 838 d,777 797 808 817 d,764 775 807 810 u,737 743 776 780 u,670 686 743 754 u,665 687 700 705 d,
670 678 699 712 u,678 678 705 717 d,667 669 703 731 u,658 669 703 709 d,670 693 703 706 u,674 679 693 724 u,667 675 680 714 u,636 640 675 686 u,
639 641 698 705 d,609 620 698 700 u,618 619 640 665 d,637 639 643 673 d,578 589 643 648 u,575 589 635 636 d,614 635 637 655 d,636 638 700 730 d,
633 637 700 743 u,626 638 657 678 d,610 611 657 678 u,603 606 610 635 u,581 606 659 705 d,494 547 660 675 u,374 383 547 571 u,374 383 438 538 d,
435 438 513 597 d,471 513 561 596 d,508 550 559 580 u,527 549 555 577 d,498 537 556 570 u,533 536 548 627 d,541 548 573 577 d,539 542 573 580 u,
543 543 560 584 d,533 547 560 561 u,518 548 564 582 d,515 524 564 567 u,524 525 554 569 d,547 552 572 576 d,555 572 572 584 d,563 572 589 598 d,
574 588 596 604 d,578 595 598 602 d,563 565 598 601 u,559 564 566 576 d,535 556 566 571 u,524 537 557 566 u,537 537 550 578 d,542 549 569 570 d,
537 541 567 569 u,530 542 575 575 d,520 527 555 569 u,524 527 545 551 d,505 544 544 549 u,515 531 544 554 u,525 533 537 563 d,527 537 552 563 d,
543 552 560 574 d,540 546 559 578 u,542 545 555 573 d,546 554 568 576 d,567 570 592 597 d,570 591 591 604 d,577 595 614 618 d,572 599 614 617 u,
582 597 597 607 u,588 597 612 628 d,566 574 612 612 u,542 547 575 584 u,469 549 574 593 d,568 574 592 620 d,599 599 614 718 d,592 613 620 632 d,
613 619 623 634 d,584 620 624 635 u,569 607 620 638 u,600 607 614 619 d,597 603 614 620 u,580 585 604 604 u,566 585 592 592 d,574 578 591 595 u,
572 577 599 606 d,558 595 599 611 u,568 596 600 613 d,597 599 634 640 d,624 633 648 650 d,633 637 649 663 u,600 626 639 641 u,584 590 627 630 u,
574 590 613 623 d,584 612 624 624 d,606 623 654 656 d,645 651 666 690 d,639 642 667 687 u,619 629 645 646 u,598 629 657 658 d,647 658 662 679 d,
645 661 707 713 d,696 707 716 719 d,714 716 729 757 d,724 728 780 780 d,765 778 815 818 d,769 776 815 815 u,763 774 834 835 d,815 830 834 850 u,
786 788 831 834 u,724 743 790 797 u,685 693 743 767 u,611 641 695 714 u,641 642 682 739 d,639 667 684 690 u,642 667 683 702 d,604 638 682 694 u,
598 626 639 654 u,626 626 687 690 d,668 687 687 709 u,654 670 687 706 u,629 638 674 711 u,531 550 637 642 u,542 551 597 624 d,571 581 596 623 u,
574 584 599 637 d,567 587 599 616 u,538 581 589 631 u,540 552 582 592 u,546 552 565 582 d,559 563 601 611 d,580 600 608 620 d,594 606 620 646 d,
619 619 643 655 d,607 607 643 659 u,580 587 608 621 u,560 572 589 595 u,556 560 574 590 u,550 559 566 583 d,546 557 566 569 u,538 538 558 574 u,
528 539 547 559 d,530 532 547 569 u,527 533 566 585 d,546 549 567 579 u,525 551 553 560 d,547 551 583 589 d,542 560 580 580 u,538 541 562 572 u,
530 540 554 563 d,543 552 569 569 d,556 557 575 588 u,530 556 581 581 d,559 565 582 582 u,533 546 567 569 u,527 536 547 549 u,513 534 545 550 d,
508 530 544 547 u,521 527 531 560 u,521 527 527 547 u,510 516 528 531 u,499 515 517 524 u,508 516 520 532 d,474 490 526 532 u,490 490 498 515 d,
486 498 503 515 d,470 486 503 504 u,468 479 487 505 u,473 479 516 516 d,217 347 444 444 u,319 344 347 384 u,275 310 345 345 u,273 285 311 319 u,
246 248 286 301 u,247 247 286 289 d,272 285 292 310 d,285 290 295 308 d,274 279 294 296 u,279 279 292 312 d,261 282 293 293 u,282 283 292 304 d,
277 283 292 313 u,266 271 283 288 u,264 271 273 286 u,267 271 273 291 d,265 270 292 292 d,282 291 303 324 d,291 298 303 318 u,296 297 314 319 d,
260 311 314 362 u,303 310 318 353 d,310 317 346 374 d,305 305 346 347 u,305 306 351 353 d,330 349 375 378 d,345 365 375 388 u,360 365 369 376 d,
345 364 370 379 u,353 364 386 390 d,339 365 387 395 u,327 336 366 380 u,324 336 363 365 d,339 349 363 371 u,296 296 349 354 u,295 295 308 349 d,
272 301 308 318 u,289 301 318 325 d,279 304 319 324 u,255 299 306 330 u,280 299 340 362 d,318 331 340 372 u,221 241 334 348 u,232 242 254 289 d,
206 211 251 312 u,186 188 212 234 u,160 186 200 225 d,144 163 200 207 u,142 164 178 210 d,120 174 177 196 u,161 173 178 213 d,154 177 182 203 d,
146 168 181 221 u,164 168 194 236 d,186 193 204 225 d,189 202 209 229 d,174 182 211 227 u,154 177 182 187 u,151 153 178 185 u,151 152 175 191 d,
139 149 174 184 u,134 148 154 162 d,138 154 166 180 d,156 161 166 183 u,153 161 192 198 d,167 190 205 206 d,193 203 243 251 d,222 233 244 254 u,
220 234 257 260 d,230 230 257 272 u,224 230 238 255 d,226 231 239 246 u,205 221 232 238 u,218 222 243 251 d,236 240 249 258 d,240 247 255 258 d,
248 254 271 274 d,247 270 320 337 d,292 297 339 362 u,295 295 327 342 d,294 319 327 333 u,279 290 320 335 u,276 279 287 293 u,266 280 300 306 d,
281 283 301 303 u,280 283 308 314 d,303 306 334 334 d,301 304 333 334 u,283 288 305 307 u,286 289 308 311 d,272 277 301 306 u,258 259 279 284 u,
238 240 260 283 u,236 240 244 251 d,218 222 244 248 u,193 220 225 241 u,208 220 224 239 d,205 220 225 231 u,196 202 221 232 u,199 202 209 229 d,
202 206 206 216 u`;

// MACD lines. A letter starts a new colour: g(reen), s(teel), p(ink)
const macdLine = `g 33,1208 37,1200 s 41,1197 47,1210 53,1221 63,1226 73,1234 79,1234 85,1240 89,1237 94,1239 101,1232 106,1223 110,1218 120,1213
g 126,1205 130,1199 133,1194 137,1193 s 142,1196 148,1208 p 152,1215 157,1221 s 161,1223 165,1228 170,1225 175,1217 181,1213 192,1215 199,1219
p 203,1228 208,1235 214,1240 218,1246 222,1254 s 224,1231 g 226,1210 229,1187 233,1179 s 237,1181 241,1193 245,1208 p 249,1223 s 253,1225 256,1216 261,1213 266,1219 272,1230
p 275,1237 282,1265 288,1281 293,1290 301,1291 311,1301 320,1320 326,1328 335,1349 340,1356 345,1360 350,1357 358,1346 362,1349 369,1352 375,1343 382,1328 387,1311
s 393,1293 p 398,1287 409,1281 414,1280 420,1271 s 433,1248 438,1225 g 442,1205 448,1189 454,1182 465,1178 475,1182 483,1185 s 490,1192 496,1202 p 505,1217 s 510,1219 518,1220
p 523,1226 532,1236 540,1250 546,1259 552,1285 558,1309 563,1323 569,1333 573,1331 578,1337 583,1337 589,1325 594,1319 598,1331 604,1338 613,1337 618,1340 629,1330
s 633,1317 638,1305 643,1281 g 646,1266 650,1250 s 657,1236 662,1234 665,1229 682,1232 688,1227 702,1229 g 709,1217 715,1210 s 721,1208 728,1212 732,1217
p 738,1226 742,1235 748,1239 s 753,1239 761,1231 776,1229 782,1227 g 790,1217 798,1203 810,1192 823,1184 829,1176 834,1175 841,1169 845,1170 850,1175 857,1173 864,1175
s 869,1182 876,1177 g 888,1174 895,1179 902,1180 s 910,1188 915,1186 g 919,1178 928,1156 933,1153 937,1148 941,1150 954,1149 958,1145 962,1151 966,1143 974,1143 977,1137 986,1144
s 990,1157 997,1163 g 1005,1158 s 1010,1166 1014,1155 g 1018,1120 1021,1108 1025,1107 s 1032,1121 g 1044,1138
s 1051,1151 1065,1168 1074,1173 1083,1190 1093,1206 1105,1206 1113,1201 1118,1204 1125,1205 1130,1201 1146,1199 1152,1204 1160,1207 1166,1213 1170,1218
p 1178,1230 1185,1235 1190,1239 s 1194,1235 1198,1228 1208,1230 p 1216,1240 1222,1243 1230,1243 s 1237,1238 1246,1231 1257,1228 1262,1234 p 1267,1241 1273,1243
s 1277,1236 1286,1236 p 1292,1244 1297,1246 s 1301,1244 p 1309,1248 1316,1261 1322,1272 1330,1297 1334,1305 1341,1320 1345,1318 1349,1308
s 1354,1285 1358,1268 1364,1253 1371,1240 1374,1227 g 1377,1217 s 1387,1217 1391,1213 g 1398,1189 1406,1176 1418,1167 1424,1160 s 1432,1167 1438,1180 1442,1186
g 1449,1187 1459,1180 1470,1175 1477,1170 1483,1175 1489,1177 s 1494,1184 1503,1185 1511,1191 1518,1197 1523,1199 g 1535,1196 1550,1189 1558,1188 1564,1183 1570,1182 1577,1178
s 1582,1182 g 1585,1160 1592,1130 1598,1106 1602,1093 1608,1086 1619,1086 1628,1096 1640,1107 1647,1115 1659,1140 1669,1161
s 1674,1173 1677,1175 1686,1200 1698,1215 1702,1223 1707,1225 1711,1222 1718,1222 g 1729,1206 s 1741,1200 1744,1203 1748,1206
g 1758,1184 1765,1166 1774,1147 1784,1138 1794,1139 1800,1146 1806,1156 1813,1158 1818,1156 1823,1159 1829,1158 1838,1164 s 1846,1182 1857,1212 1867,1221 1876,1225
p 1887,1235 1895,1251 1905,1266 1915,1261 s 1922,1258 p 1930,1264 s 1944,1253 g 1954,1232 1966,1210 1980,1196 1985,1192`;

const signalLine = `g 33,1270 35,1262 s 46,1231 54,1217 62,1212 69,1215 80,1226 92,1234 100,1236 105,1235 116,1228 125,1221 g 137,1209 s 145,1203 p 157,1204
s 164,1208 175,1217 182,1219 199,1218 p 207,1218 215,1224 222,1232 s 226,1231 g 233,1225 s 241,1215 248,1210 254,1208 260,1202 266,1206 274,1218
p 289,1240 302,1270 313,1290 326,1308 338,1325 351,1344 357,1348 370,1353 378,1350 387,1341 s 397,1326 p 409,1303 420,1286 s 435,1269
g 446,1247 458,1215 470,1191 478,1183 485,1182 s 492,1182 499,1186 p 506,1195 s 520,1210 p 547,1237 557,1258 568,1288 582,1319 588,1327 600,1331 612,1333 625,1334
s 629,1335 637,1331 643,1321 g 649,1310 s 670,1253 682,1235 690,1231 705,1229 g 716,1224 s 724,1219 733,1216 p 742,1216 749,1221 s 759,1230 774,1234 784,1231
g 795,1225 806,1214 817,1202 830,1188 842,1178 853,1174 862,1172 s 871,1174 g 885,1176 901,1178 s 912,1179 g 918,1181 926,1179 938,1171 955,1153 970,1148 986,1144
s 1002,1149 1014,1155 g 1019,1153 1026,1143 s 1035,1133 g 1046,1126 s 1050,1127 1067,1151 1080,1169 1093,1183 1105,1197 1117,1203 1125,1205 1138,1202 1163,1202 1170,1205
p 1178,1210 1189,1222 s 1198,1230 1208,1232 p 1228,1237 s 1243,1240 1255,1236 p 1273,1234 s 1283,1235 p 1297,1240 s 1305,1242
p 1311,1243 1322,1253 1330,1262 1340,1283 1349,1297 s 1353,1300 1358,1300 1365,1293 1372,1279 g 1377,1264 s 1387,1240 1392,1230 g 1406,1205 1427,1174
s 1436,1169 1449,1172 g 1463,1180 1472,1182 1490,1176 s 1500,1177 1508,1179 1525,1190 g 1538,1195 1551,1195 1566,1189 1578,1184 s 1585,1180
g 1594,1168 1602,1150 1611,1125 1622,1099 1629,1092 1634,1091 1643,1097 1656,1110 1669,1130 s 1680,1153 1694,1181 1710,1209 1719,1218
g 1726,1219 s 1734,1217 1752,1206 g 1765,1194 1778,1173 1789,1156 1799,1145 1809,1144 1817,1147 1838,1159 s 1850,1167 1859,1180 1876,1209
p 1897,1234 1917,1255 s 1925,1260 p 1932,1262 s 1942,1261 1951,1256 g 1962,1246 1973,1228 1985,1211`;

const separators = [361, 409, 793, 1177, 1561, 1945, 2329];
const firstX = 33;
const step = 4;

function drawSeparators(top, bottom) {
    return separators.map(x =>
        `<path d="M${x + 0.5} ${top}V${bottom}" stroke="#fff" stroke-dasharray="3 3"/>`
    ).join('');
}

function drawCandles() {
    let green = '';
    let white = '';
    let black = '';
    candles.trim().split(',').forEach((row, i) => {
        const parts = row.trim().split(' ');
        const [high, top, bottom, low] = parts.map(Number);
        const x = firstX + i * step;
        green += `M${x} ${high}h1V${low + 1}h-1z`;
        green += `M${x - 1} ${top}h3V${bottom + 1}h-3z`;
        if (bottom - top > 1) {
            const inner = `M${x} ${top + 1}h1V${bottom}h-1z`;
            if (parts[4] === 'd') {
                white += inner;
            } else {
                black += inner;
            }
        }
    });
    return `<path d="${green}" fill="#0f0"/><path d="${black}" fill="#000"/><path d="${white}" fill="#fff"/>`;
}

function drawLine(data, gray) {
    const colors = { g: '#7ba30d', s: gray, p: '#e0115f' };
    let html = '';
    let color = '';
    let last = '';
    data.split(/\s+/).forEach(token => {
        if (colors[token]) {
            color = colors[token];
            return;
        }
        if (last) {
            html += `<path d="M${last}L${token}" stroke="${color}"/>`;
        }
        last = token;
    });
    return html;
}

document.getElementById('price-chart').innerHTML =
    drawSeparators(71, 1069) +
    '<path d="M33 195.500H2484" stroke="#f00"/><path d="M33 207.500H2484" stroke="#778899"/>' +
    '<path d="M1988 71h9l-4.500 5z" fill="#999"/>' +
    drawCandles();

document.getElementById('macd-chart').innerHTML =
    drawSeparators(1072, 1374) + drawLine(signalLine, '#585858') + drawLine(macdLine, '#6e6e6e');

// Price scale, 45 points a step. 0.90310 is covered by the bid tag
let priceTicks = '';
for (let p = 90490; p >= 89185; p -= 45) {
    priceTicks += `<span>${p === 90310 ? '' : (p / 100000).toFixed(5)}</span>`;
}
document.getElementById('price-ticks').innerHTML = priceTicks;

// Time scale, a label every 16 bars
const labels = [];
['9', '12', '13', '14', '15'].forEach(day => {
    ['00:30', '04:30', '08:30', '12:30', '16:30', '20:30'].forEach(time => labels.push(`${day} Aug ${time}`));
});
labels[0] = '9 Aug 2019';
labels.push('16 Aug 00:30');
document.getElementById('time-axis').innerHTML = labels.map(label => `<span>${label}</span>`).join('');
```
